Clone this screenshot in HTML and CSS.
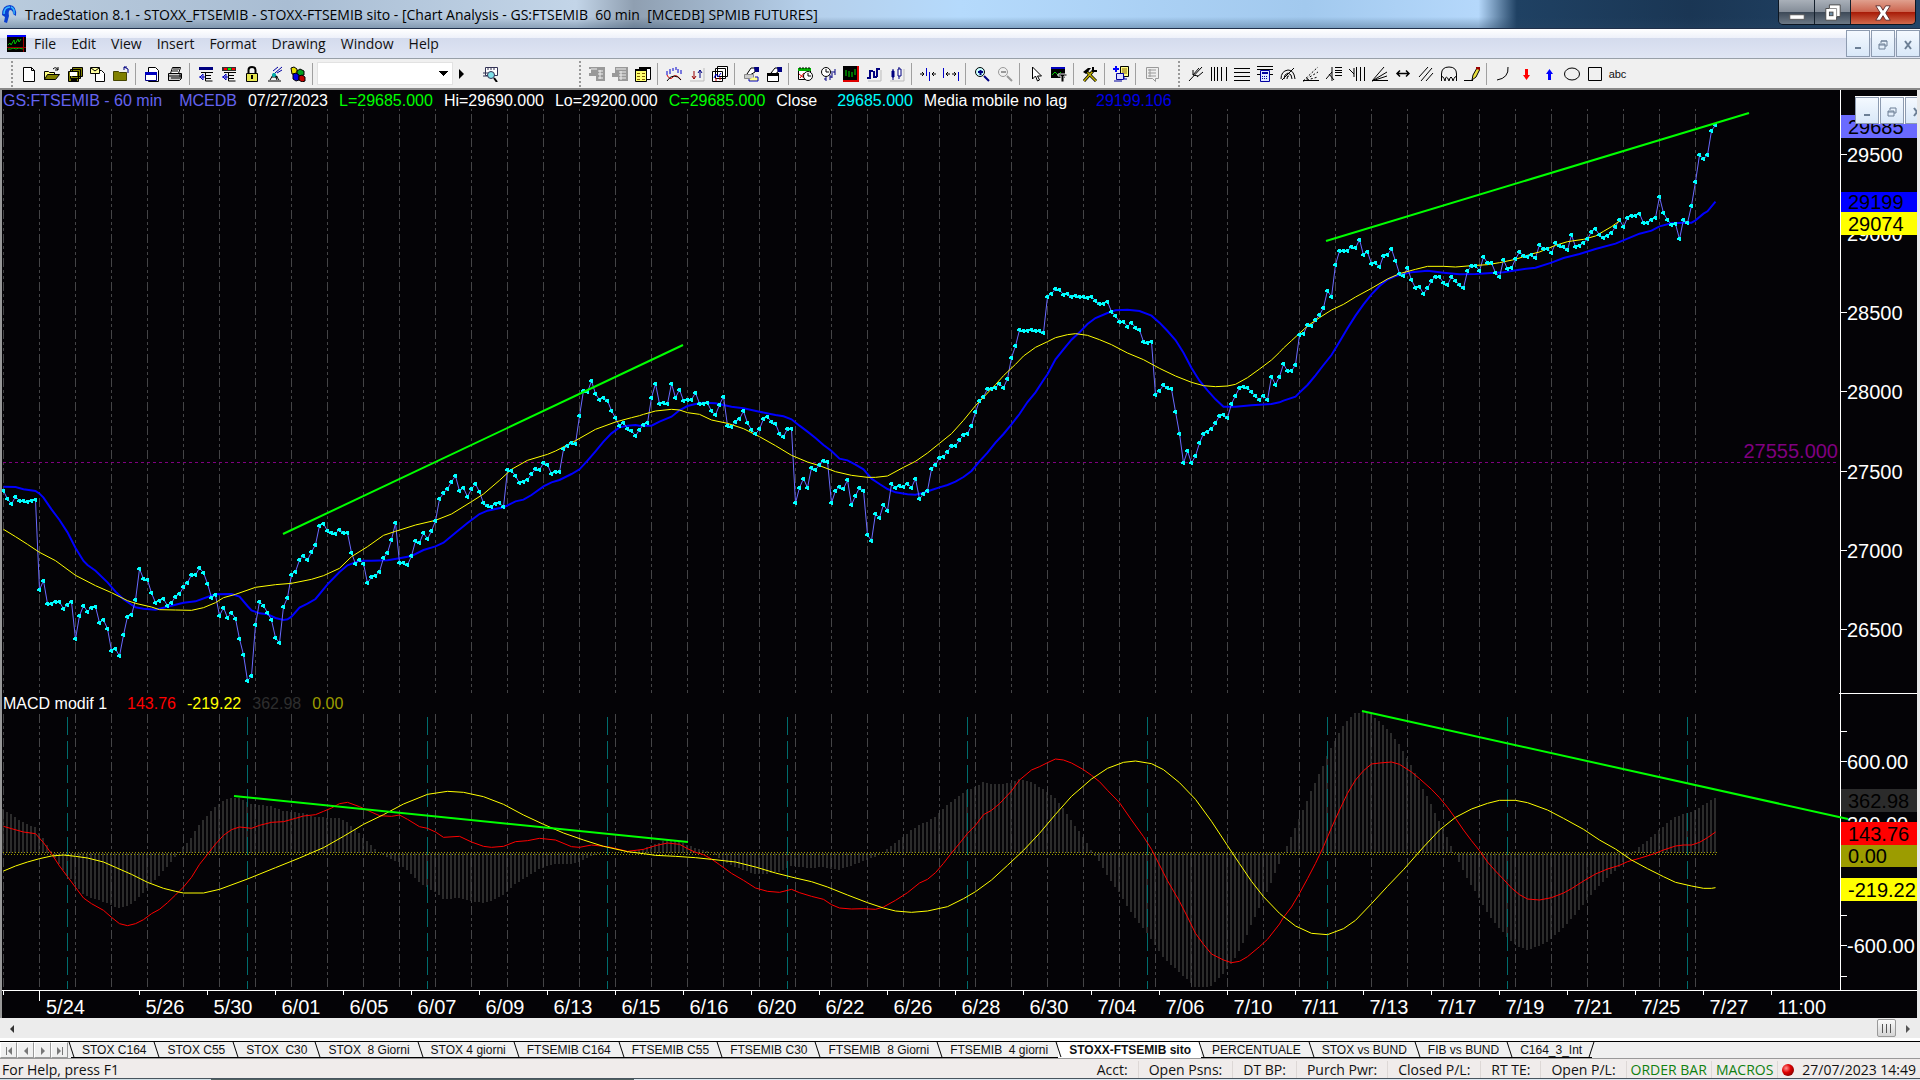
FILE: index.html
```html
<!DOCTYPE html>
<html lang="it">
<head>
    <meta charset="UTF-8">
    <meta name="viewport" content="width=device-width, initial-scale=1.0">
    <title>TradeStation 8.1 - STOXX_FTSEMIB</title>
    <link rel="stylesheet" href="styles.css">
</head>
<body>
    <header class="titlebar">
        <svg class="app-icon" viewBox="0 0 18 20"><path d="M2 11Q2 1 10 1Q17 2 16 12L13 10Q13 6 10 6Q8 7 9 12L7 19L4 18L5 13Z" fill="#0b3fd0"/><path d="M4 10Q4 3 10 3M14 10Q15 5 11 3" stroke="#39b8ff" stroke-width="1.5" fill="none"/></svg>
        <h1>TradeStation 8.1 - STOXX_FTSEMIB - STOXX-FTSEMIB sito - [Chart Analysis - GS:FTSEMIB&nbsp; 60 min&nbsp; [MCEDB] SPMIB FUTURES]</h1>
        <div class="win-buttons">
            <button class="win-btn" aria-label="Minimize"><svg viewBox="0 0 20 20"><rect x="2" y="12" width="16" height="5" fill="#fff" stroke="#555"/></svg></button>
            <button class="win-btn" aria-label="Restore"><svg viewBox="0 0 20 20"><path d="M6 1h12v13h-4v4H2V5h4z" fill="#fff" stroke="#444"/><path d="M6 5h8v9" fill="none" stroke="#888"/><rect x="6" y="9" width="4" height="4" fill="#6f8fa8" stroke="#444"/></svg></button>
            <button class="win-btn win-close" aria-label="Close"><svg viewBox="0 0 20 20"><path d="M2 2h5l3 5 3-5h5l-5 8 5 8h-5l-3-5-3 5H2l5-8z" fill="#fff" stroke="#5a2a2a"/></svg></button>
        </div>
    </header>

    <nav class="menubar">
        <svg class="menu-icon" viewBox="0 0 19 17"><rect width="19" height="17" fill="#000"/><rect width="19" height="2" fill="#00f"/><path d="M1 10l2-2 1 2 3-5 1 4 3-5 1 3 2-3" stroke="#0b0" fill="none"/><path d="M1 14h3l2-1 3 1 3-1 4 1" stroke="#0b0" fill="none"/><path d="M0 12.500h19M16.500 2v15" stroke="#900"/></svg>
        <a href="#">File</a>
        <a href="#">Edit</a>
        <a href="#">View</a>
        <a href="#">Insert</a>
        <a href="#">Format</a>
        <a href="#">Drawing</a>
        <a href="#">Window</a>
        <a href="#">Help</a>
        <div class="mdi-buttons">
            <button class="mdi-btn" aria-label="Minimize chart"><svg viewBox="0 0 12 12"><path d="M3 9h6" stroke="#6c7f95" stroke-width="2"/></svg></button>
            <button class="mdi-btn" aria-label="Restore chart"><svg viewBox="0 0 12 12"><path d="M4 4V2h6v5H8M4 2h6M2 5h6v5H2zM2 6h6" fill="none" stroke="#6c7f95"/></svg></button>
            <button class="mdi-btn" aria-label="Close chart"><svg viewBox="0 0 12 12"><path d="M3 2l6 8M9 2l-6 8" stroke="#6c7f95" stroke-width="2"/></svg></button>
        </div>
    </nav>

    <div class="toolbar">
        <span class="grip"></span>
        <button class="tb" aria-label="New"><svg viewBox="0 0 16 16"><path d="M2.500 1.500h8l3 3v11h-11zM10.500 1.500v3h3" fill="#fff" stroke="#000"/></svg></button>
        <button class="tb" aria-label="Open"><svg viewBox="0 0 16 16"><path d="M.5 13.500v-8h4l1 1h5v3" fill="#ffff80" stroke="#000"/><path d="M.5 13.500l3-5h12l-4 5z" fill="#808000" stroke="#000"/><path d="M9 3q3-3 5 1m0-3v3h-3" fill="none" stroke="#000"/></svg></button>
        <button class="tb" aria-label="Save all"><svg viewBox="0 0 16 16"><path d="M5.500 1.500h10v9h-10zM3.500 3.500h10v9h-10zM1.500 5.500h10v10h-10z" fill="#808000" stroke="#000"/><path d="M3 6h7v4H3z" fill="#fff"/><path d="M4 12h6v4H4z"/></svg></button>
        <button class="tb" aria-label="Send"><svg viewBox="0 0 16 16"><path d="M5.500 4.500h6l3 3v8h-9z" fill="#fff" stroke="#000"/><path d="M.5 1.500h9v6h-9z" fill="#ffffa0" stroke="#000"/><path d="M1 2l4 3 4-3" fill="none" stroke="#000"/></svg></button>
        <button class="tb" aria-label="Close folder"><svg viewBox="0 0 16 16"><path d="M.5 14.500v-9h5l1 1h7v8z" fill="#808000" stroke="#444400"/><path d="M15 7V3l-4-2m0 3V1h3" fill="none" stroke="#000080"/></svg></button>
        <span class="sep"></span>
        <button class="tb" aria-label="Page setup"><svg viewBox="0 0 16 16"><path d="M4.500 1.500h7l3 3v11h-10z" fill="#fff" stroke="#000"/><path d="M1.500 6.500h11v8h-11z" fill="#fff" stroke="#000080"/><path d="M1 6h12v3H1z" fill="#0000c0"/></svg></button>
        <button class="tb" aria-label="Print"><svg viewBox="0 0 16 16"><path d="M5.500 1.500h8l-2 6h-8z" fill="#fff" stroke="#000"/><path d="M1.500 7.500h13v5l-2 2h-11z" fill="#ccc" stroke="#000"/><path d="M6 3h6M5 5h6M2 10h12M4 12h8M13 8v5" stroke="#000"/></svg></button>
        <span class="sep"></span>
        <button class="tb" aria-label="Format symbol"><svg viewBox="0 0 16 16"><path d="M1 1h14v3H1z" fill="#000080"/><path d="M3 6.500h12M7.500 6v9h7M7 9.500h6M7 12.500h6" fill="none" stroke="#000"/><path d="M5 8v6M1 11h6M5 14l-3-3 3-3" fill="none" stroke="#0000c0"/></svg></button>
        <button class="tb" aria-label="Format indicators"><svg viewBox="0 0 16 16"><path d="M1 1h14v4H1z" fill="#333"/><path d="M3 2h3v2H3z" fill="#f00"/><path d="M7 2h3v2H7z" fill="#0e0"/><path d="M11 2h3v2h-3z" fill="#f00"/><path d="M3 6.500h12M7.500 7v8h7M7 9.500h6M7 12.500h6" fill="none" stroke="#000"/><path d="M5 8v6M1 11h6M5 14l-3-3 3-3" fill="none" stroke="#0000c0"/></svg></button>
        <button class="tb" aria-label="Lock"><svg viewBox="0 0 16 16"><path d="M4.500 8V4q0-3 3.500-3t3.500 3v4" fill="none" stroke="#000" stroke-width="2"/><path d="M2.500 7.500h11v8h-11z" fill="#e6e650" stroke="#000"/><path d="M7 9h2v4H7z"/></svg></button>
        <button class="tb" aria-label="Radar"><svg viewBox="0 0 16 16"><path d="M1 15h13M3 14l4-7 5 7M5 11h6M8 9l2 5" fill="none" stroke="#000"/><path d="M8 7l7-6M10 7l5-3M6 5l5-4" stroke="#0000a0"/><circle cx="7" cy="9" r="2" fill="#00b0b0"/></svg></button>
        <button class="tb" aria-label="Blocks"><svg viewBox="0 0 16 16"><path d="M1 2l3-1 3 2v5H2z" fill="#e8e000" stroke="#000"/><path d="M7 5l3-2 4 2v4l-4 1-3-2z" fill="#00a020" stroke="#000"/><path d="M3 8l3-1 3 2v5l-3 1-3-2z" fill="#0000e0" stroke="#000"/><path d="M9 10l3-1 3 2v4l-3 1-3-2z" fill="#c00000" stroke="#000"/></svg></button>
        <span class="sep"></span>
        <select class="symbol-box" aria-label="Symbol"><option></option></select>
        <button class="tb go" aria-label="Go"><svg viewBox="0 0 16 16"><path d="M5 3v10l5-5z"/></svg></button>
        <button class="tb find" aria-label="Symbol lookup"><svg viewBox="0 0 16 16"><path d="M3.500 1.500h12v8h-12zM1 7h5M1 10h5M6 2v2M9 2v2M12 2v2" fill="#fff" stroke="#335"/><circle cx="9" cy="9" r="3.500" fill="#7fe0e8" stroke="#335"/><path d="M12 12l3 4" stroke="#000" stroke-width="2"/></svg></button>

        <span class="grip grip-chart"></span>
        <button class="tb" aria-label="Orders" disabled><svg viewBox="0 0 16 16"><path d="M0 1h16v14H7v-5H0V7h2V3H0z" fill="#999"/><path d="M2 3h6M9 5h5M9 8h5M9 12h5M11 4v9" fill="none" stroke="#eee"/></svg></button>
        <button class="tb" aria-label="Positions" disabled><svg viewBox="0 0 16 16"><path d="M3 1h13v14H6v-4H0V7h3z" fill="#999"/><path d="M4 3h10M7 6h7M7 9h7M7 12h7M9 5v9" stroke="#eee"/></svg></button>
        <button class="tb" aria-label="Data window"><svg viewBox="0 0 16 16"><path d="M4.500 1.500h11v12h-11z" fill="#fff" stroke="#000"/><path d="M.5 3.500h11v12H.5z" fill="#ffff70" stroke="#000"/><path d="M4 1h12v2H4zM0 3h12v2H0z"/><path d="M2 7.500h3M7 7.500h3M2 10.500h3M7 10.500h3M2 13.500h3M7 13.500h3" stroke="#806000"/></svg></button>
        <span class="sep"></span>
        <button class="tb" aria-label="Insert analysis"><svg viewBox="0 0 16 16"><path d="M1 5v4M4 3v5M7 2v3M10 1v3M12 3v4M15 4v4" stroke="#00c"/><path d="M1 9q3 6 6 2t8 3" fill="none" stroke="#d00"/><path d="M1 15q3-5 7-5t7 4" fill="none" stroke="#000"/></svg></button>
        <button class="tb" aria-label="Insert strategy"><svg viewBox="0 0 16 16"><path d="M5 5v8M3 10l2 3 2-3" stroke="#900" fill="none"/><path d="M11 12V4M9 7l2-3 2 3" stroke="#000080" fill="none"/><path d="M15 2v13H1" stroke="#bbb" fill="none"/></svg></button>
        <button class="tb" aria-label="Multi chart"><svg viewBox="0 0 16 16"><path d="M5.500.5h10v10h-10zM3.500 2.500h10v10h-10zM.5 5.500h10v10H.5z" fill="#fff" stroke="#000"/><path d="M2 12l2-4 2 3 3-4" fill="none" stroke="#00c"/><path d="M4 12v3M8 14v-3" stroke="#c00"/></svg></button>
        <span class="sep"></span>
        <button class="tb" aria-label="Format analysis"><svg viewBox="0 0 16 16"><path d="M4 8l4-6h4v4L7 9z" fill="#fff" stroke="#000"/><path d="M11 1h5v5h-4z" fill="#000080"/><path d="M1.500 8.500h9v4h-9z" fill="#ccc" stroke="#888"/><path d="M6 13v2h9v-4h-3" fill="#ff8" stroke="#0000c0"/></svg></button>
        <button class="tb" aria-label="Format window"><svg viewBox="0 0 16 16"><path d="M5 7l4-5h3v4L9 8z" fill="#fff" stroke="#000"/><path d="M11 1h5v5h-4z" fill="#000080"/><path d="M1.500 8.500h11v7h-11z" fill="#fff" stroke="#000"/><path d="M1 7h12v3H1z"/></svg></button>
        <span class="sep"></span>
        <button class="tb" aria-label="Calendar"><svg viewBox="0 0 16 16"><path d="M1.500 2.500h12v11h-12z" fill="#fff" stroke="#000"/><path d="M1 2h13v3H1z" fill="#00b000"/><path d="M3 1v2M6 1v2M9 1v2M12 1v2" stroke="#000"/><path d="M2 8l5 4M7 7l-4 5" stroke="#d00"/><circle cx="11" cy="10" r="4.500" fill="#fff" stroke="#000"/><path d="M11 7v3h3" fill="none" stroke="#000"/></svg></button>
        <button class="tb" aria-label="Bar interval"><svg viewBox="0 0 16 16"><circle cx="6" cy="6" r="4.500" fill="#fff" stroke="#000"/><path d="M6 3v3h3" fill="none" stroke="#000"/><path d="M6 11v4M10 9v5M12 5v7M15 3v6M4 13h2M10 11h2M13 6h2" stroke="#000080"/></svg></button>
        <button class="tb" aria-label="OHLC bars"><svg viewBox="0 0 16 16"><path d="M0 0h14v14H0z"/><path d="M14 0h2v16H0v-2h14z" fill="#e00000"/><path d="M3 4v6M6 5v6M9 6v5M12 3v6" stroke="#0d0"/></svg></button>
        <button class="tb" aria-label="Line style"><svg viewBox="0 0 16 16"><path d="M4 4v9M1 12h3M4 5h3M11 2v9M8 11h3M11 3h3M8 5v7" stroke="#000080" stroke-width="2"/><path d="M15 4v11H2" stroke="#bbb" fill="none"/></svg></button>
        <button class="tb" aria-label="Candlesticks"><svg viewBox="0 0 16 16"><path d="M4 3v11M10 1v12" stroke="#000080"/><path d="M3 5h2v6H3zM9 3h3v7H9z" fill="#fff" stroke="#000080"/><path d="M3 5h2v6H3z" fill="#000080"/><path d="M15 3v12H1" stroke="#bbb" fill="none"/></svg></button>
        <span class="sep"></span>
        <button class="tb" aria-label="Decrease spacing"><svg viewBox="0 0 16 16"><path d="M0 8h4M2 6l2 2-2 2M16 8h-4M14 6l-2 2 2 2" fill="none" stroke="#000"/><path d="M6.500 2v8M9.500 6v9" stroke="#00c"/></svg></button>
        <button class="tb" aria-label="Increase spacing"><svg viewBox="0 0 16 16"><path d="M3 8h4M5 6L3 8l2 2M13 8H9M11 6l2 2-2 2" fill="none" stroke="#000"/><path d="M.5 2v10M15.500 6v9" stroke="#00c"/></svg></button>
        <span class="sep"></span>
        <button class="tb" aria-label="Zoom in"><svg viewBox="0 0 16 16"><circle cx="6" cy="6" r="4.500" fill="#c8ffff" stroke="#000"/><path d="M4 6h5M6.500 4v5M10 10l5 5" stroke="#000080" stroke-width="2"/></svg></button>
        <button class="tb" aria-label="Zoom out" disabled><svg viewBox="0 0 16 16"><circle cx="6" cy="6" r="4.500" fill="none" stroke="#999"/><path d="M4 6h5M10 10l5 5" stroke="#999" stroke-width="2"/></svg></button>
        <span class="sep"></span>
        <button class="tb" aria-label="Pointer"><svg viewBox="0 0 16 16"><path d="M4.500 1v12l3-3 2 5 2-1-2-4h4z" fill="#fff" stroke="#000"/></svg></button>
        <button class="tb" aria-label="Text tool"><svg viewBox="0 0 16 16"><path d="M0 1h14v11H0z"/><path d="M0 1h14v2H0z" fill="#0000c0"/><path d="M1 9l3-3 3 3 3-3" stroke="#0c0" fill="none"/><path d="M7 8h9v2h-3v6h-3v-6H7z" stroke="#eee"/></svg></button>
        <span class="sep"></span>
        <button class="tb" aria-label="Tools"><svg viewBox="0 0 16 16"><path d="M2 15L11 5M4 5l10 10" stroke="#000" stroke-width="3"/><path d="M2 15L11 5M4 5l10 10" stroke="#c0b000" stroke-width="1.5"/><path d="M1 6l5-4h3L4 8z"/><path d="M11 1v4h4" fill="none" stroke="#000" stroke-width="2"/></svg></button>
        <span class="sep"></span>
        <button class="tb" aria-label="Add workspace"><svg viewBox="0 0 16 16"><path d="M7.500.5h8v10h-8z" fill="#ff8" stroke="#000"/><path d="M9 3h5M9 5h5M9 7h5" stroke="#886000"/><path d="M3.500 7.500h7v6h-7z" fill="#ddf" stroke="#0000a0"/><path d="M1 15h8M11 10v3h3" stroke="#0000a0" fill="none"/><path d="M3 0v6M0 3h6" stroke="#00f" stroke-width="2"/></svg></button>
        <span class="sep"></span>
        <button class="tb" aria-label="Comment" disabled><svg viewBox="0 0 16 16"><path d="M2.500 1.500h12v11h-3v3l-3-3h-6z" fill="#eee" stroke="#999"/><path d="M4 4h8M4 7h8M4 10h8M6 3v8" stroke="#999"/></svg></button>

        <span class="grip grip-draw"></span>
        <button class="tb" aria-label="Pitchfork"><svg viewBox="0 0 16 16"><path d="M1 15L14 1M5 4v5l5 1M5 9l6-7M9 11l6-5" fill="none" stroke="#000"/></svg></button>
        <button class="tb" aria-label="Time lines"><svg viewBox="0 0 16 16"><path d="M.5 1v14M3.500 1v14M6.500 1v14M10.500 1v14M15.500 1v14" stroke="#000"/></svg></button>
        <button class="tb" aria-label="Price lines"><svg viewBox="0 0 16 16"><path d="M0 2.500h16M0 6.500h16M0 10.500h16M0 14.500h16" stroke="#000"/></svg></button>
        <button class="tb" aria-label="Calculator"><svg viewBox="0 0 16 16"><path d="M0 .5h16M0 3.500h16M0 8.500h16" stroke="#000"/><path d="M3.500 4.500h9v11h-9z" fill="#dde6ff" stroke="#0000a0"/><path d="M5 6h6v2H5z" fill="#0000a0"/><path d="M5 10.500h6M5 12.500h6" stroke="#0000a0" stroke-dasharray="1 1"/></svg></button>
        <button class="tb" aria-label="Speed arc"><svg viewBox="0 0 16 16"><path d="M1 13q0-8 7-9 6 0 7 9M4 13q0-5 4-6 4 1 4 6M2 14L14 2M7 13q0-4 2-3" fill="none" stroke="#000"/></svg></button>
        <button class="tb" aria-label="Gann fan"><svg viewBox="0 0 16 16"><path d="M0 15L15 1M0 15L15 6M0 15l15-4" stroke="#000" stroke-dasharray="2 2"/><path d="M0 14.500h16" stroke="#000"/></svg></button>
        <button class="tb" aria-label="Retracement"><svg viewBox="0 0 16 16"><path d="M0 13l6-7v9M6 6V1M3 8l5 6M9 1.500h7M9 4.500h7M9 6.500h7M9 9.500h7" fill="none" stroke="#000"/></svg></button>
        <button class="tb" aria-label="Time extension"><svg viewBox="0 0 16 16"><path d="M0 3l5 5V2M7.500 1v14M11.500 1v14M15.500 1v14M5 8v3" fill="none" stroke="#000"/></svg></button>
        <button class="tb" aria-label="Fan lines"><svg viewBox="0 0 16 16"><path d="M0 14.500h16M0 15L12 1M0 15L15 6M0 15l15-5" stroke="#000"/></svg></button>
        <button class="tb" aria-label="Horizontal line"><svg viewBox="0 0 16 16"><path d="M2 7.500h12M5 4.500l-3 3 3 3M11 4.500l3 3-3 3" fill="none" stroke="#000" stroke-width="1.500"/></svg></button>
        <button class="tb" aria-label="Parallel lines"><svg viewBox="0 0 16 16"><path d="M1 11L10 1M3 15L14 2M8 15l7-8" stroke="#000"/></svg></button>
        <button class="tb" aria-label="Cycle"><svg viewBox="0 0 16 16"><path d="M.5 15V8q0-7 7.500-7t7.500 7v7M0 11q2-2 4 4 1-8 4 0 2-8 4 0 2-6 4-4" fill="none" stroke="#000"/></svg></button>
        <button class="tb" aria-label="Pencil"><svg viewBox="0 0 16 16"><path d="M0 14.500h9" stroke="#000"/><path d="M8 14l1-5 4-7 3 1-4 8z" fill="#e8e040" stroke="#000"/><path d="M12 1h4v3l-4-1z" fill="#900"/></svg></button>
        <span class="sep"></span>
        <button class="tb" aria-label="Arc"><svg viewBox="0 0 16 16"><path d="M13 1q1 11-11 13" fill="none" stroke="#000"/></svg></button>
        <button class="tb" aria-label="Down arrow"><svg viewBox="0 0 16 16"><path d="M7 3h3v6h2l-3.500 5L5 9h2z" fill="#f00"/></svg></button>
        <button class="tb" aria-label="Up arrow"><svg viewBox="0 0 16 16"><path d="M7 14h3V8h2L8.500 3 5 8h2z" fill="#00f"/></svg></button>
        <button class="tb" aria-label="Ellipse"><svg viewBox="0 0 16 16"><ellipse cx="8" cy="8" rx="7.500" ry="6" fill="none" stroke="#000"/></svg></button>
        <button class="tb" aria-label="Rectangle"><svg viewBox="0 0 16 16"><path d="M1.500 1.500h13v13h-13z" fill="none" stroke="#000"/></svg></button>
        <button class="tb" aria-label="Insert text">abc</button>
    </div>

    <main class="chart">
        <svg id="plot" viewBox="0 90 1920 928" preserveAspectRatio="none"></svg>
        <div class="legend">
            <span class="violet">GS:FTSEMIB - 60 min</span>
            <span class="violet wide">MCEDB</span>
            <span>07/27/2023</span>
            <span class="green">L=29685.000</span>
            <span>Hi=29690.000</span>
            <span>Lo=29200.000</span>
            <span class="green">C=29685.000</span>
            <span>Close</span>
            <span class="cyan wider">29685.000</span>
            <span>Media mobile no lag</span>
            <span class="blue widest">29199.106</span>
        </div>
        <div class="legend legend-macd">
            <span>MACD modif 1</span>
            <span class="red wider">143.76</span>
            <span class="yellow">-219.22</span>
            <span class="grey">362.98</span>
            <span class="olive">0.00</span>
        </div>
        <div class="mdi-buttons mdi-float">
            <button class="mdi-btn" aria-label="Minimize window"><svg viewBox="0 0 12 12"><path d="M3 9h6" stroke="#6c7f95" stroke-width="2"/></svg></button>
            <button class="mdi-btn" aria-label="Restore window"><svg viewBox="0 0 12 12"><path d="M4 4V2h6v5H8M2 5h6v5H2zM2 6h6" fill="none" stroke="#6c7f95"/></svg></button>
            <button class="mdi-btn" aria-label="Close window"><svg viewBox="0 0 12 12"><path d="M3 2l6 8M9 2l-6 8" stroke="#6c7f95" stroke-width="2"/></svg></button>
        </div>
    </main>

    <div class="scrollbar">
        <button class="scroll-btn" aria-label="Scroll left"><svg viewBox="0 0 8 10"><path d="M6 1v8L2 5z" fill="#333"/></svg></button>
        <div class="scroll-track"><span class="scroll-thumb"></span></div>
        <button class="scroll-btn" aria-label="Scroll right"><svg viewBox="0 0 8 10"><path d="M2 1v8l4-4z" fill="#555"/></svg></button>
    </div>

    <div class="workspaces">
        <button class="nav-btn" aria-label="First"><svg viewBox="0 0 10 10"><path d="M2.500 1v8" stroke="#777"/><path d="M8 1v8L4 5z" fill="#777"/></svg></button>
        <button class="nav-btn" aria-label="Previous"><svg viewBox="0 0 10 10"><path d="M7 1v8L3 5z" fill="#777"/></svg></button>
        <button class="nav-btn" aria-label="Next"><svg viewBox="0 0 10 10"><path d="M3 1v8l4-4z" fill="#777"/></svg></button>
        <button class="nav-btn" aria-label="Last"><svg viewBox="0 0 10 10"><path d="M7.500 1v8" stroke="#777"/><path d="M2 1v8l4-4z" fill="#777"/></svg></button>
        <div class="tabs">
            <a class="tab" href="#">STOX C164</a>
            <a class="tab" href="#">STOX C55</a>
            <a class="tab" href="#">STOX&nbsp; C30</a>
            <a class="tab" href="#">STOX&nbsp; 8 Giorni</a>
            <a class="tab" href="#">STOX 4 giorni</a>
            <a class="tab" href="#">FTSEMIB C164</a>
            <a class="tab" href="#">FTSEMIB C55</a>
            <a class="tab" href="#">FTSEMIB C30</a>
            <a class="tab" href="#">FTSEMIB&nbsp; 8 Giorni</a>
            <a class="tab" href="#">FTSEMIB&nbsp; 4 giorni</a>
            <a class="tab active" href="#">STOXX-FTSEMIB sito</a>
            <a class="tab" href="#">PERCENTUALE</a>
            <a class="tab" href="#">STOX vs BUND</a>
            <a class="tab" href="#">FIB vs BUND</a>
            <a class="tab" href="#">C164_3_Int</a>
        </div>
    </div>

    <footer class="statusbar">
        <span class="help">For Help, press F1</span>
        <span class="cell">Acct:</span>
        <span class="cell">Open Psns:</span>
        <span class="cell">DT BP:</span>
        <span class="cell">Purch Pwr:</span>
        <span class="cell">Closed P/L:</span>
        <span class="cell">RT TE:</span>
        <span class="cell">Open P/L:</span>
        <span class="cell on">ORDER BAR</span>
        <span class="cell on">MACROS</span>
        <span class="led"></span>
        <span class="clock">27/07/2023 14:49</span>
    </footer>
    <div class="desktop-edge"></div>
    <script src="chart.js"></script>
</body>
</html>
```

FILE: styles.css
```css
* {
    box-sizing: border-box;
}
body {
    margin: 0;
    height: 100vh;
    display: flex;
    flex-direction: column;
    overflow: hidden;
    font-family: "Open Sans", "Noto Sans", sans-serif;
    font-size: 14px;
    color: #111;
    background: #f0eeee;
}
button {
    padding: 0;
    border: none;
    background: none;
    font: inherit;
    color: inherit;
}
a {
    color: inherit;
    text-decoration: none;
}

/* title bar */
.titlebar {
    display: flex;
    align-items: center;
    height: 29px;
    flex: none;
    padding-right: 4px;
    background:
        linear-gradient(to bottom, transparent 60%, rgba(40, 70, 100, 0.35)),
        linear-gradient(to right, #b9cbdd 0, #a9bdd3 15%, #c3d5e8 30%, #8f9fb1 33%, #b5cfea 42%, #b5dafc 50%, #a2c9ee 68%, #b5d8fb 77%, #1f4163 79%, #1a3654 88%, #23466a 100%);
    border-bottom: 1px solid #20304a;
}
.app-icon {
    width: 18px;
    height: 20px;
    margin-right: 7px;
}
.titlebar h1 {
    flex: 1;
    margin: 0;
    font-size: 14px;
    font-weight: normal;
    white-space: nowrap;
    color: #000;
}
.win-buttons {
    display: flex;
    align-self: flex-start;
    height: 25px;
    border: 1px solid #0c1622;
    border-top: none;
    border-radius: 0 0 5px 5px;
    overflow: hidden;
}
.win-btn {
    width: 36px;
    border-right: 1px solid #14202c;
    background: linear-gradient(#a9b0b9 0, #858e99 48%, #3e4a58 52%, #6d7986 100%);
}
.win-btn svg {
    width: 18px;
    height: 18px;
    vertical-align: middle;
}
.win-close {
    width: 64px;
    border-right: none;
    background: linear-gradient(#e0a08e 0, #cc6650 48%, #a81c08 52%, #d26a4c 100%);
}

/* menu */
.menubar {
    display: flex;
    align-items: center;
    gap: 15px;
    height: 30px;
    flex: none;
    padding-left: 7px;
    background: linear-gradient(#fff 0, #eef1fa 30%, #d4dbed 32%, #e0e6f4 100%);
    border-bottom: 1px solid #98a0a8;
}
.menu-icon {
    width: 19px;
    height: 17px;
    margin-right: -7px;
}
.mdi-buttons {
    display: flex;
    gap: 1px;
}
.menubar .mdi-buttons {
    margin-left: auto;
}
.mdi-btn {
    width: 24px;
    height: 27px;
    border: 1px solid #8d9bb0;
    background: linear-gradient(#f4f9ff, #d9e8f8);
}
.mdi-btn svg {
    width: 12px;
    height: 12px;
    vertical-align: middle;
}

/* toolbar */
.toolbar {
    display: flex;
    align-items: center;
    height: 31px;
    flex: none;
    padding-left: 11px;
    background: #f0f0f0;
    border-bottom: 2px solid #888;
}
.tb {
    width: 23px;
    height: 22px;
    flex: none;
    font-family: "Liberation Sans", Arial, sans-serif;
    font-size: 11px;
}
.tb svg {
    width: 16px;
    height: 16px;
    vertical-align: middle;
}
.sep {
    width: 1px;
    height: 22px;
    flex: none;
    margin: 0 4px 0 3px;
    background: #a0a0a0;
}
.grip {
    width: 2px;
    height: 26px;
    flex: none;
    margin-right: 4px;
    background: repeating-linear-gradient(#999 0 2px, transparent 2px 4px);
}
.grip-chart {
    margin-left: 78px;
}
.grip-draw {
    margin-left: 15px;
}
.symbol-box {
    width: 136px;
    height: 23px;
    flex: none;
    border: 1px solid #e2e2e2;
    border-radius: 0;
    appearance: none;
    background-color: #fff;
    background-repeat: no-repeat;
    background-image: linear-gradient(#000, #000), linear-gradient(#000, #000), linear-gradient(#000, #000), linear-gradient(#000, #000), linear-gradient(#000, #000);
    background-position: 121px 8px, 122px 9px, 123px 10px, 124px 11px, 125px 12px;
    background-size: 9px 1px, 7px 1px, 5px 1px, 3px 1px, 1px 1px;
}
.go {
    width: 17px;
}
.find {
    margin-left: 8px;
}

/* chart */
.chart {
    position: relative;
    flex: 1;
    min-height: 0;
    border-left: 2px solid #999;
    border-right: 3px solid #e8e8e8;
    background: #040306;
    overflow: hidden;
}
#plot {
    display: block;
    width: calc(100% + 5px);
    height: 100%;
    margin-left: -2px;
}
#plot text {
    font-family: "Liberation Sans", Arial, sans-serif;
    font-size: 20px;
    fill: #fff;
}
.legend {
    position: absolute;
    left: 1px;
    top: 0;
    display: flex;
    gap: 11px;
    font: 16px/22px "Liberation Sans", Arial, sans-serif;
    white-space: nowrap;
    color: #fff;
}
.legend-macd {
    top: 65%;
}
.wide {
    margin-left: 6px;
}
.wider {
    margin-left: 9px;
}
.widest {
    margin-left: 18px;
}
.violet { color: #6464f0; }
.green { color: #00ff00; }
.cyan { color: #00ffff; }
.blue { color: #0000e6; }
.red { color: #ff0000; }
.yellow { color: #ffff00; }
.grey { color: #2e2e2e; }
.olive { color: #9c9c00; }
.mdi-float {
    position: absolute;
    top: 6px;
    right: -12px;
    background: #fff;
    border-top: 1px solid #fff;
}

/* plot marks */
.grid { stroke: #444446; stroke-dasharray: 9 3 3 3 3 3; }
.session { stroke: #006c6c; stroke-dasharray: 18 6; }
.axis { stroke: #fff; fill: none; }
.alert { stroke: #800080; stroke-dasharray: 3 3; }
.price { stroke: #6a6aff; fill: none; }
.dots { fill: #00ffff; }
.slow { stroke: #0000ff; stroke-width: 2; fill: none; }
.fast { stroke: #ffff00; fill: none; }
.macd { stroke: #ff0000; fill: none; }
.hist { stroke: #2b2b2b; stroke-width: 2; }
.zero { stroke: #9c9c00; stroke-dasharray: 1 2; }
.trend { stroke: #00ff00; stroke-width: 2; }
#plot .on-box { fill: #000; }
#plot .alert-text { fill: #800080; text-anchor: end; }

/* scroll bar */
.scrollbar {
    display: flex;
    align-items: center;
    height: 23px;
    flex: none;
    background: #ececec;
    border-bottom: 3px solid #fff;
}
.scroll-btn {
    width: 24px;
}
.scroll-btn svg {
    width: 8px;
    height: 10px;
}
.scroll-track {
    flex: 1;
    display: flex;
    justify-content: flex-end;
}
.scroll-thumb {
    width: 19px;
    height: 18px;
    border: 1px solid #999;
    border-radius: 2px;
    background:
        repeating-linear-gradient(to right, #555 0 1px, transparent 1px 4px) no-repeat center / 9px 9px,
        linear-gradient(#fafafa, #d4d4d4);
}

/* workspace tabs */
.workspaces {
    display: flex;
    height: 18px;
    flex: none;
    background: #f0f0f0;
    border-top: 1px solid #000;
    border-bottom: 1px solid #999;
    font: 12px/16px "Liberation Sans", Arial, sans-serif;
}
.nav-btn {
    width: 17px;
    border: 1px solid #999;
    border-top-color: #fff;
    border-left-color: #fff;
    line-height: 12px;
}
.nav-btn svg {
    width: 10px;
    height: 10px;
    vertical-align: middle;
}
.tabs {
    display: flex;
    margin-left: 3px;
}
.tab {
    position: relative;
    padding: 0 10px 0 11px;
    white-space: nowrap;
    border-bottom: 1px solid #000;
}
.tab::before {
    content: "";
    position: absolute;
    left: 0;
    top: 0;
    bottom: 0;
    border-left: 1px solid #000;
    transform: skewX(18deg);
}
.tab:last-child::after {
    content: "";
    position: absolute;
    right: 0;
    top: 0;
    bottom: 0;
    border-right: 1px solid #000;
    transform: skewX(-18deg);
}
.active {
    background: #fff;
    font-weight: bold;
    border-bottom-color: #fff;
}

/* status bar */
.statusbar {
    display: flex;
    align-items: center;
    height: 19px;
    flex: none;
    padding: 2px 4px 0 2px;
    background: #f0eceb;
    line-height: 18px;
}
.help {
    flex: 1;
}
.cell {
    padding: 0 10px;
    border-right: 1px solid #ddd8d6;
}
.on {
    padding: 0 4px;
    color: #108010;
}
.led {
    width: 12px;
    height: 12px;
    margin: 0 8px 0 4px;
    border-radius: 50%;
    background: radial-gradient(circle at 35% 35%, #ff9090, #e00000 40%, #500000);
}
.desktop-edge {
    height: 2px;
    flex: none;
    border-top: 1px solid #48545e;
    background: linear-gradient(to right, #cfdfe6 0 11%, #506060 11% 33%, #dce9f2 33%);
}
```

FILE: chart.js
```js
const plot = document.getElementById('plot');

function add(tag, attrs, text) {
    const el = document.createElementNS('http://www.w3.org/2000/svg', tag);
    for (const key in attrs) el.setAttribute(key, attrs[key]);
    if (text) el.textContent = text;
    plot.appendChild(el);
}

const barX = i => 3.5 + i * 4;
// prices and indicator values are kept as thirds of a plot unit
const priceY = v => 90 + v / 3;
const macdY = v => 680 + v / 3;
const shift = (list, by) => list.map(v => v + by);
const shiftPairs = (list, by) => list.map((v, i) => i % 2 ? v + by : v);

const closes = [
    ...shift([453,477,492,470,482,483,485,483,480,749,722,791,791,786,786,806,795,786,897,827,797,815,803,800,848,840,866,932,927,948,
        885,830,825,780,687,716,720,759,788,782,777,797,788,770,762,741,728,705,705,684,698,731,773,765,827,803,833,818,836,897,
        944,1022,1008,854,785,797,818,840,893,909,800,773,704,695,660,648,660,636,614,557,551,573,578,581,569,578,579,638,672,660,
        671,729,711,708,695,654,638,599,549,668,669,675,648,603,608,579,597,573,543,477,459,447,425,408,453,444,470,447,432,456,
        489,497,501,491,489,501,390,392,408,429,426,420,402,387,389,369,374,402,396,396,328,318,309,311,228,152,156,123,161,180,
        173,182,212,234,258,248,266,272,288,269], 750),
    ...shift([494,489,413,371,431,429,431,371,413,389,422,419,419,398,431,431,429,453,465,434,410,497,500,486,477,453,489,509,522,507,
        477,470,486,491,521,530,507,507,729,683,656,683,623,629,615,602,605,729,692,681,686,660,735,707,683,692,825,842,761,773,
        734,752,672,683,678,680,671,683,656,717,701,692,627,615,593,591,575,558,558,540,525,521,497,456,423,411,387,387,383,371,
        383,356,293,258,210,213,213,210,212,213,218,110,101,87,90,104,101,110,107,110,111,113,110,122,132,131,125,155,168,185,
        185,200,188,203,210,245,249,246,405,393,375,384,387,455,521,609,573,609,588,549,521,516,507,489,467,464,474,431,407,383], 510),
    890,893,906,918,930,917,930,860,884,860,822,843,843,824,735,732,704,708,690,675,653,602,621,524,483,483,483,470,474,449,
    495,486,521,518,531,497,494,477,513,551,558,534,570,594,591,611,594,573,560,561,578,585,560,572,585,594,543,527,527,543,
    500,519,519,548,561,510,537,534,507,486,497,500,495,504,464,477,477,489,459,467,470,480,435,470,467,459,447,425,417,435,
    444,438,429,410,389,411,383,378,377,371,399,399,390,383,321,369,389,405,402,447,389,399,347,275,195,207,195,122,105
];

// bar, value pairs
const slowMa = [
    ...shiftPairs([0,440,3,441,5,448,8,453,9,461,10,473,12,508,14,540,16,577,18,624,20,663,21,675,23,692,26,727,28,755,30,778,31,786,33,802,35,806,
        38,809,40,803,43,794,45,788,48,784,51,771,53,763,57,762,59,770,61,798,62,811,64,820,66,823,68,834,70,840,71,838,72,830,74,803,76,791,
        78,777,81,733,84,696,86,676,89,662,92,662,96,661,99,655,102,648,105,630,108,619,110,608,113,578,116,549,119,522,121,512,125,502,128,484,
        130,479,132,465,135,439,137,427,139,420,142,402,144,388,146,362,148,334,150,305,152,280,154,262,156,257,158,255,159,257], 750),
    ...shiftPairs([162,497,164,485,167,470,169,451,171,438,173,432,175,428,178,430,180,435,182,440,185,445,189,455,193,465,195,469,197,478,199,497,
        201,515,203,534,205,555,207,573,209,596,211,601,213,614,215,628,217,656,219,672,221,687,223,697,226,703,228,704,230,698,232,690,234,682,
        236,675,238,665,240,651,242,633,244,604,246,578,248,548,250,522,252,493,254,462,256,426,258,397,260,360,261,343,263,298,265,268,267,239,
        269,217,271,192,273,174,276,159,278,151,281,149,284,153,287,167,289,188,291,213,293,240,295,278,297,324,299,362,301,391,303,418,305,440,
        308,440,312,436], 510),
    314,944,317,942,319,937,320,932,323,920,324,908,326,885,328,856,330,825,332,795,334,755,336,715,338,677,340,643,342,613,344,588,346,569,
    348,558,350,552,352,547,356,542,360,548,364,553,368,552,372,549,375,547,379,539,383,533,387,518,390,504,394,492,398,477,403,461,406,446,
    409,431,412,422,414,409,417,400,420,398,422,398,423,391,425,371,426,364,428,335
];
const fastMa = [
    ...shiftPairs([0,568,3,590,6,613,9,637,13,662,18,706,23,737,27,758,31,782,33,790,37,801,39,809,43,810,47,811,50,803,53,788,55,773,58,763,63,742,
        68,734,72,730,77,718,80,707,84,685,87,650,91,620,95,586,98,574,103,555,108,541,112,522,117,485,120,462,124,421,127,388,131,361,136,343,
        138,333,143,302,148,268,153,246,157,233,159,227], 750),
    ...shiftPairs([160,463,163,453,167,448,169,450,171,458,174,463,177,480,181,490,185,506,189,530,193,557,197,586,201,606,204,617,208,635,212,646,
        216,652,218,652,221,648,225,622,228,604,231,579,234,550,237,521,240,481,243,437,246,399,248,374,250,347,253,313,255,288,258,262,261,245,
        263,233,266,224,268,221,271,226,274,239,277,254,281,279,285,299,289,325,293,348,297,367,300,377,303,380,306,378,308,373,311,353,314,327,
        317,300], 510),
    319,787,320,774,322,752,324,730,326,708,329,683,332,660,335,643,338,621,342,595,346,567,349,551,353,538,356,529,360,529,363,531,367,527,
    371,524,374,518,378,508,382,492,384,486,388,466,391,455,395,448,398,438,400,424,402,410,404,393
];
const macd = [0,439,2,446,5,456,8,461,10,488,12,521,14,558,16,590,18,622,20,654,22,671,25,691,27,712,29,731,31,737,33,731,35,719,37,701,39,688,41,668,
    43,645,45,621,47,592,49,553,51,523,53,492,55,466,57,449,59,441,62,445,64,436,67,427,70,425,73,415,75,408,78,404,80,394,82,384,84,371,86,367,
    89,380,91,391,94,407,97,409,99,405,101,418,104,440,106,445,108,456,110,472,114,469,117,486,120,499,122,502,125,499,128,485,131,482,134,475,
    138,480,142,500,144,502,147,495,151,500,156,514,160,508,163,497,166,489,169,493,171,506,173,517,175,524,177,537,179,554,182,580,185,601,188,624,
    191,634,194,637,197,628,199,638,202,649,205,658,207,674,209,684,212,687,215,686,218,688,220,681,223,661,226,638,229,609,231,598,233,578,
    235,550,237,519,239,490,241,460,243,436,245,404,247,391,249,371,252,333,254,300,257,270,259,260,261,248,263,237,265,240,267,249,270,269,
    272,286,274,305,276,331,279,368,282,420,285,470,287,508,289,555,291,602,294,664,296,711,298,760,300,793,302,822,305,840,307,848,309,844,
    311,830,314,800,316,778,319,732,320,712,322,681,324,640,326,596,328,550,330,500,332,443,334,390,336,340,338,300,340,272,342,252,344,249,
    347,246,349,253,352,276,354,296,357,328,359,353,361,382,363,415,365,450,367,482,369,512,371,546,373,573,375,598,377,624,379,644,381,657,
    384,660,387,653,390,639,392,626,395,603,398,582,401,567,404,556,406,545,409,535,413,520,415,510,418,498,420,495,422,495,424,487,426,473,428,456];
const signal = [0,573,3,558,6,546,9,536,12,528,15,525,18,529,21,534,25,546,28,562,32,583,36,607,40,625,43,634,45,639,50,639,54,628,61,597,68,563,
    74,534,80,503,85,469,90,433,95,404,100,372,106,343,111,334,115,337,120,350,125,373,130,405,135,433,140,459,145,480,150,499,156,515,160,521,
    163,526,168,529,173,533,177,538,183,546,188,561,193,579,198,594,202,605,206,621,211,645,216,668,220,684,223,693,227,697,231,693,236,680,
    240,656,243,635,247,600,251,556,255,511,259,460,263,403,267,349,272,297,276,265,280,247,283,243,287,251,290,269,294,308,298,358,302,424,
    306,497,309,551,312,604,315,650,319,700,320,710,323,738,327,760,331,764,335,746,338,721,342,671,346,619,350,569,355,501,359,450,363,412,
    367,387,371,370,374,361,378,361,381,368,386,390,390,415,395,448,399,480,403,507,407,540,411,566,415,590,418,607,422,618,425,625,427,625,428,623];

function valueAt(pairs, bar) {
    for (let i = 2; i < pairs.length; i += 2) {
        if (pairs[i] >= bar) {
            const t = (bar - pairs[i - 2]) / (pairs[i] - pairs[i - 2] || 1);
            return pairs[i - 1] + t * (pairs[i + 1] - pairs[i - 1]);
        }
    }
    return pairs[pairs.length - 1];
}
function line(cls, pairs, toY) {
    let points = '';
    for (let i = 0; i < pairs.length; i += 2) points += barX(pairs[i]) + ',' + toY(pairs[i + 1]) + ' ';
    add('polyline', { class: cls, points });
}

// MACD histogram, the gap between the two lines
for (let i = 0; i <= 428; i++) {
    const gap = valueAt(macd, i) - valueAt(signal, i);
    add('path', { class: 'hist', d: `M${barX(i) - 0.5} 853V${Math.min(989, Math.round(macdY(520 + gap)))}` });
}

// grid
for (let k = 0; k < 48; k++) {
    const x = 3.5 + k * 36;
    add('path', { class: 'grid', 'stroke-dashoffset': 19, d: `M${x} 109V693` });
    add('path', { class: 'grid', d: `M${x} 714V987` });
}
for (let k = 0; k < 10; k++) {
    const x = 67.5 + k * 180;
    add('path', { class: 'session', d: `M${x} 717V989` });
}
add('path', { class: 'alert', d: 'M3 462.5H1838' });
add('path', { class: 'zero', d: 'M3 852.5H1717' });
add('path', { class: 'zero', 'stroke-dashoffset': 1, d: 'M3 854.5H1717' });

line('slow', slowMa, priceY);
add('polyline', { class: 'price', points: closes.map((v, i) => barX(i) + ',' + priceY(v)).join(' ') });
line('fast', fastMa, priceY);
add('path', {
    class: 'dots',
    d: closes.map((v, i) => `M${2 + i * 4} ${Math.round(priceY(v)) - 2}h3v4h-2v-1h-2v-2h1z`).join('')
});
line('macd', macd, macdY);
line('fast', signal, macdY);

// axes
add('path', { class: 'axis', d: 'M1840.5 90V990M1839 693.5H1918M2 990.5H1918M3.5 990v5M39.5 990v11' });
add('text', { x: 46, y: 1014 }, '5/24');
const days = ['5/26', '5/30', '6/01', '6/05', '6/07', '6/09', '6/13', '6/15', '6/16', '6/20', '6/22', '6/26', '6/28',
    '6/30', '7/04', '7/06', '7/10', '7/11', '7/13', '7/17', '7/19', '7/21', '7/25', '7/27', '11:00'];
days.forEach((day, k) => {
    const x = 139.5 + k * 68;
    add('path', { class: 'axis', d: `M${x} 990v5` });
    add('text', { x: x + 6, y: 1014 }, day);
});
const ticks = [[154, '29500'], [233, '29000'], [312, '28500'], [391, '28000'], [471, '27500'], [550, '27000'], [629, '26500'],
    [731, ''], [761, '600.00'], [823, '300.00'], [885, '-300.00'], [915, ''], [945, '-600.00'], [976, '']];
ticks.forEach(([y, label]) => {
    add('path', { class: 'axis', d: `M1840 ${y + 0.5}h7` });
    add('text', { x: 1847, y: y + 8 }, label);
});
const boxes = [[115, 23, '#6a6aff', '29685'], [192, 21, '#0000ff', '29199'], [212, 23, '#ffff00', '29074'],
    [789, 23, '#2b2b2b', '362.98'], [822, 23, '#ff0000', '143.76'], [845, 22, '#9c9c00', '0.00'], [878, 23, '#ffff00', '-219.22']];
boxes.forEach(([y, h, fill, label]) => {
    add('rect', { x: 1841, y, width: 77, height: h, fill });
    add('text', { x: 1848, y: y + h - 4, class: 'on-box' }, label);
});
add('text', { x: 1838, y: 458, class: 'alert-text' }, '27555.000');

// trend lines
[[283, 534, 683, 345], [1326, 241, 1749, 113], [234, 796, 688, 842], [1362, 711, 1848, 819]].forEach(([x1, y1, x2, y2]) => {
    add('line', { class: 'trend', x1, y1, x2, y2 });
});
```
